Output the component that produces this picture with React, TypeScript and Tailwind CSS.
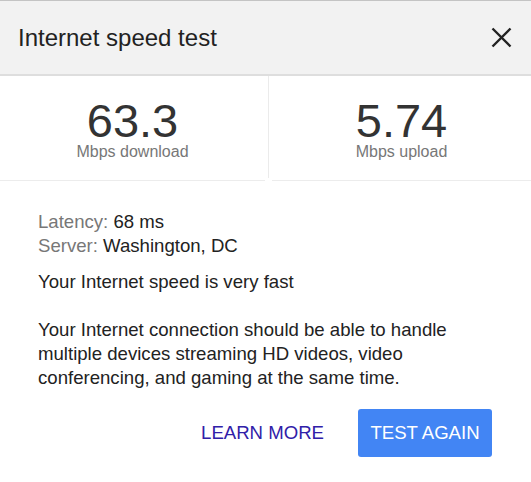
import React from "react";

export default function App() {
  const font = { fontFamily: '"Liberation Sans", Arial, sans-serif' };
  return (
    <div className="w-[531px] h-[482px] bg-white overflow-hidden" style={font}>
      <div className="border-t border-[#c4c4c4]">
        <div className="h-[75px] bg-[#f2f2f2] border-b-2 border-[#dedede] flex items-center justify-between pl-[18px] pr-[19px]">
          <div className="text-[24px] leading-[28px] text-[#222]">Internet speed test</div>
          <svg width="21" height="21" viewBox="0 0 21 21">
            <path d="M1.5 1.5 L19.5 19.5 M19.5 1.5 L1.5 19.5" stroke="#222" strokeWidth="2.4" fill="none" />
          </svg>
        </div>
      </div>
      <div className="flex">
        <div className="w-[265px] border-b border-[#ececec] pt-[19px] pb-[22px] flex flex-col items-center">
          <div className="text-[47px] leading-[51px] text-[#333]">63.3</div>
          <div className="text-[16px] leading-[12px] text-[#777]">Mbps download</div>
        </div>
        <div className="w-[7px] flex justify-center">
          <div className="w-px bg-[#ebebeb] mb-[3px]" />
        </div>
        <div className="flex-1 border-b border-[#ececec] pt-[19px] pb-[22px] flex flex-col items-center">
          <div className="text-[47px] leading-[51px] text-[#333]">5.74</div>
          <div className="text-[16px] leading-[12px] text-[#777]">Mbps upload</div>
        </div>
      </div>
      <div className="pl-[38px] pr-[39px] pt-[29px] text-[18.6px] leading-[24px] text-[#222]">
        <div>
          <span className="text-[#777]">Latency:</span> 68 ms
        </div>
        <div>
          <span className="text-[#777]">Server:</span> Washington, DC
        </div>
        <div className="mt-[12px]">Your Internet speed is very fast</div>
        <p className="mt-[24px]">
          Your Internet connection should be able to handle multiple devices streaming HD videos, video conferencing, and gaming at the same time.
        </p>
        <div className="mt-[19px] flex justify-end items-center gap-[21px]">
          <button className="h-[48px] px-[13px] text-[#3020a8]">LEARN MORE</button>
          <button className="h-[48px] w-[134px] rounded-[3px] bg-[#4285f4] text-white flex items-center justify-center">TEST AGAIN</button>
        </div>
      </div>
    </div>
  );
}
